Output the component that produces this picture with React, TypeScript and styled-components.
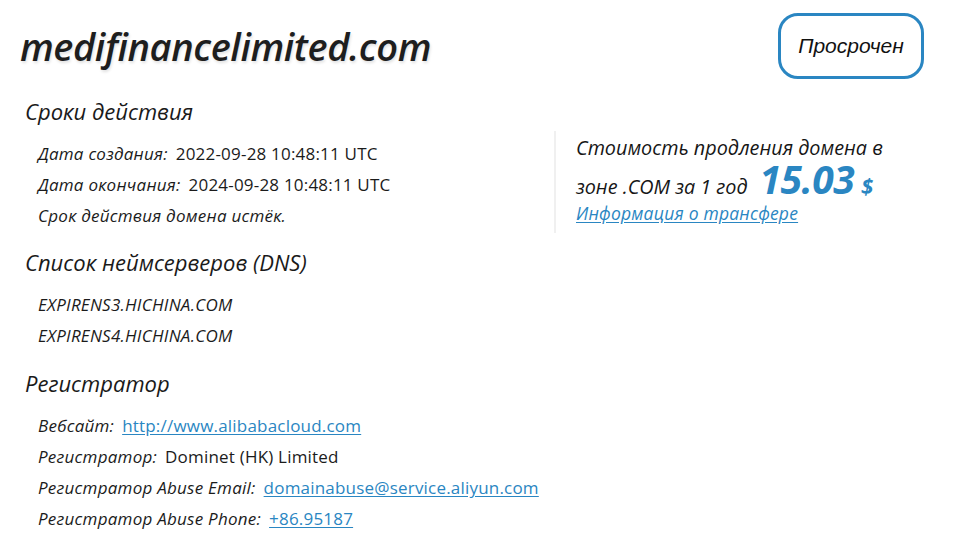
import React from "react";
import styled, { createGlobalStyle } from "styled-components";

const GlobalStyle = createGlobalStyle`
  html, body {
    margin: 0;
    padding: 0;
    background: #fff;
  }
  body {
    font-family: "Open Sans", "Noto Sans", sans-serif;
    color: #1b1b1b;
  }
`;

const BLUE = "#2a86c2";

const Page = styled.div`
  width: 962px;
  height: 555px;
  box-sizing: border-box;
  padding: 14px 38px 0 20px;
  overflow: hidden;
`;

const Header = styled.header`
  display: flex;
  justify-content: space-between;
  align-items: flex-start;
  height: 80px;
`;

const Domain = styled.h1`
  margin: 10px 0 0;
  font-size: 38px;
  font-weight: 600;
  font-style: italic;
  letter-spacing: -0.4px;
  line-height: 44px;
  color: #1e1e1e;
  text-shadow: 1px 2px 3px rgba(0, 0, 0, 0.12);
`;

const StatusBadge = styled.div`
  width: 146px;
  height: 66px;
  box-sizing: border-box;
  margin-top: -1px;
  border: 3px solid ${BLUE};
  border-radius: 20px;
  display: flex;
  align-items: center;
  justify-content: center;
  font-family: "Liberation Sans", "Open Sans", sans-serif;
  font-style: italic;
  font-size: 21px;
  color: #111;
`;

const Body = styled.div`
  display: grid;
  grid-template-columns: 534px 1fr;
`;

const Column = styled.div`
  display: flex;
  flex-direction: column;
`;

const SectionTitle = styled.h2`
  margin: 0 0 0 5px;
  font-size: 22px;
  font-weight: 400;
  font-style: italic;
  line-height: 34px;
  color: #1a1a1a;
`;

const Rows = styled.div<{ $after?: number }>`
  display: flex;
  flex-direction: column;
  padding: 10px 0 0 18px;
  margin-bottom: ${(p) => p.$after ?? 0}px;
`;

const Row = styled.div`
  font-size: 17px;
  line-height: 31px;
  white-space: nowrap;
`;

const Label = styled.span`
  font-style: italic;
  letter-spacing: 0.25px;
  margin-right: 8px;
`;

const Value = styled.span`
  font-style: normal;
  letter-spacing: 0.2px;
`;

const Link = styled.a`
  color: ${BLUE};
  letter-spacing: 0.2px;
  text-decoration: underline;
  text-underline-offset: 2px;
`;

const PricePanel = styled.aside`
  margin-top: 37px;
  height: 101px;
  border-left: 2px solid #f0f0f0;
  padding: 1px 0 0 20px;
`;

const PriceText = styled.div`
  font-size: 19.8px;
  font-style: italic;
  line-height: 32px;
  color: #161616;
`;

const Price = styled.span`
  display: inline-block;
  color: ${BLUE};
  font-weight: 700;
  font-style: italic;
  font-size: 39px;
  line-height: 30px;
  margin-left: 12px;
  letter-spacing: -0.5px;
`;

const Currency = styled.span`
  color: ${BLUE};
  font-weight: 700;
  font-style: italic;
  font-size: 22px;
  margin-left: 7px;
`;

const TransferLink = styled(Link)`
  display: inline-block;
  font-size: 17.5px;
  font-style: italic;
  line-height: 20px;
`;

export default function App() {
  return (
    <Page>
      <GlobalStyle />
      <Header>
        <Domain>medifinancelimited.com</Domain>
        <StatusBadge>Просрочен</StatusBadge>
      </Header>

      <Body>
        <Column>
          <SectionTitle>Сроки действия</SectionTitle>
          <Rows $after={14}>
            <Row>
              <Label>Дата создания:</Label>
              <Value>2022-09-28 10:48:11 UTC</Value>
            </Row>
            <Row>
              <Label>Дата окончания:</Label>
              <Value>2024-09-28 10:48:11 UTC</Value>
            </Row>
            <Row>
              <Label>Срок действия домена истёк.</Label>
            </Row>
          </Rows>

          <SectionTitle>Список неймсерверов (DNS)</SectionTitle>
          <Rows $after={15}>
            <Row>
              <Label>EXPIRENS3.HICHINA.COM</Label>
            </Row>
            <Row>
              <Label>EXPIRENS4.HICHINA.COM</Label>
            </Row>
          </Rows>

          <SectionTitle>Регистратор</SectionTitle>
          <Rows>
            <Row>
              <Label>Вебсайт:</Label>
              <Link href="#">http://www.alibabacloud.com</Link>
            </Row>
            <Row>
              <Label>Регистратор:</Label>
              <Value>Dominet (HK) Limited</Value>
            </Row>
            <Row>
              <Label>Регистратор Abuse Email:</Label>
              <Link href="#">domainabuse@service.aliyun.com</Link>
            </Row>
            <Row>
              <Label>Регистратор Abuse Phone:</Label>
              <Link href="#">+86.95187</Link>
            </Row>
          </Rows>
        </Column>

        <PricePanel>
          <PriceText>Стоимость продления домена в</PriceText>
          <PriceText>
            зоне .COM за 1 год
            <Price>15.03</Price>
            <Currency>$</Currency>
          </PriceText>
          <TransferLink href="#">Информация о трансфере</TransferLink>
        </PricePanel>
      </Body>
    </Page>
  );
}
